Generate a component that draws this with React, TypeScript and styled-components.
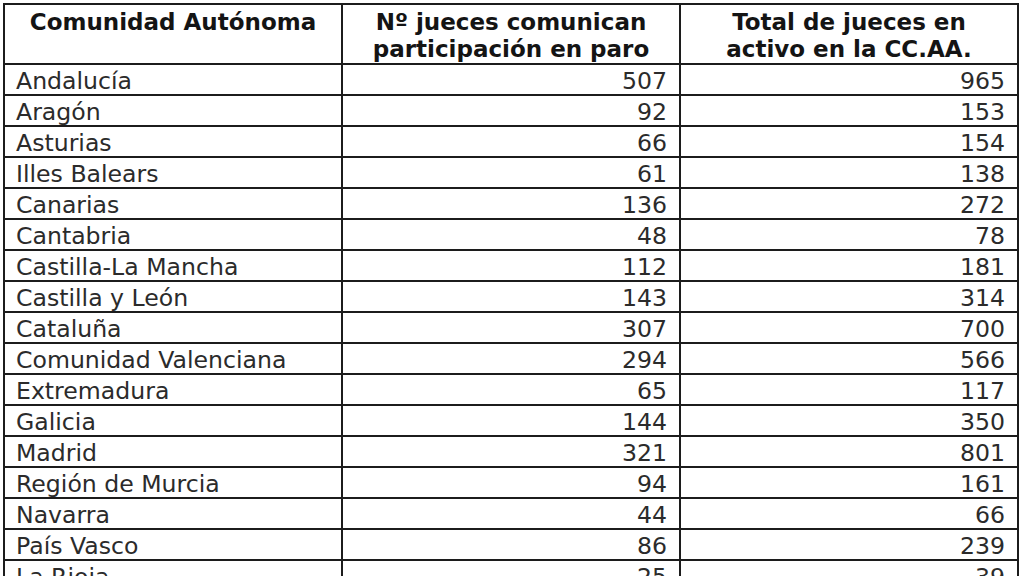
import React from 'react'
import styled, { createGlobalStyle } from 'styled-components'

const GlobalStyle = createGlobalStyle`
  html, body {
    margin: 0;
    padding: 0;
    background: #ffffff;
    overflow: hidden;
  }
`

const Page = styled.div`
  width: 1024px;
  height: 576px;
  padding: 3px 0 0 3px;
  box-sizing: border-box;
  overflow: hidden;
  background: #ffffff;
`

const Sheet = styled.div`
  display: grid;
  grid-template-columns: 338px 338px 338px;
  width: max-content;
  border-top: 2px solid #1c1c1c;
  border-left: 2px solid #1c1c1c;
`

const HeaderCell = styled.div`
  box-sizing: border-box;
  height: 60px;
  padding-top: 4px;
  border-right: 2px solid #1c1c1c;
  border-bottom: 2px solid #1c1c1c;
  font-family: 'DejaVu Sans', Verdana, sans-serif;
  font-weight: bold;
  font-size: 23px;
  line-height: 27px;
  color: #141414;
  text-align: center;
  white-space: nowrap;
`

const Cell = styled.div<{ $align?: 'left' | 'right' }>`
  box-sizing: border-box;
  height: 31px;
  padding: 3px ${(p) => (p.$align === 'right' ? '12px' : '0')} 0
    ${(p) => (p.$align === 'right' ? '0' : '11px')};
  border-right: 2px solid #1c1c1c;
  border-bottom: 2px solid #1c1c1c;
  font-family: 'DejaVu Sans', Verdana, sans-serif;
  font-size: 23.6px;
  line-height: 26px;
  color: #2b2b2b;
  text-align: ${(p) => p.$align ?? 'left'};
  white-space: nowrap;
`

const rows: [string, number, number][] = [
  ['Andalucía', 507, 965],
  ['Aragón', 92, 153],
  ['Asturias', 66, 154],
  ['Illes Balears', 61, 138],
  ['Canarias', 136, 272],
  ['Cantabria', 48, 78],
  ['Castilla-La Mancha', 112, 181],
  ['Castilla y León', 143, 314],
  ['Cataluña', 307, 700],
  ['Comunidad Valenciana', 294, 566],
  ['Extremadura', 65, 117],
  ['Galicia', 144, 350],
  ['Madrid', 321, 801],
  ['Región de Murcia', 94, 161],
  ['Navarra', 44, 66],
  ['País Vasco', 86, 239],
  ['La Rioja', 25, 39],
]

export default function App() {
  return (
    <>
      <GlobalStyle />
      <Page>
        <Sheet>
          <HeaderCell>Comunidad Autónoma</HeaderCell>
          <HeaderCell>
            Nº jueces comunican
            <br />
            participación en paro
          </HeaderCell>
          <HeaderCell>
            Total de jueces en
            <br />
            activo en la CC.AA.
          </HeaderCell>
          {rows.map(([name, paro, total]) => (
            <React.Fragment key={name}>
              <Cell>{name}</Cell>
              <Cell $align="right">{paro}</Cell>
              <Cell $align="right">{total}</Cell>
            </React.Fragment>
          ))}
        </Sheet>
      </Page>
    </>
  )
}
